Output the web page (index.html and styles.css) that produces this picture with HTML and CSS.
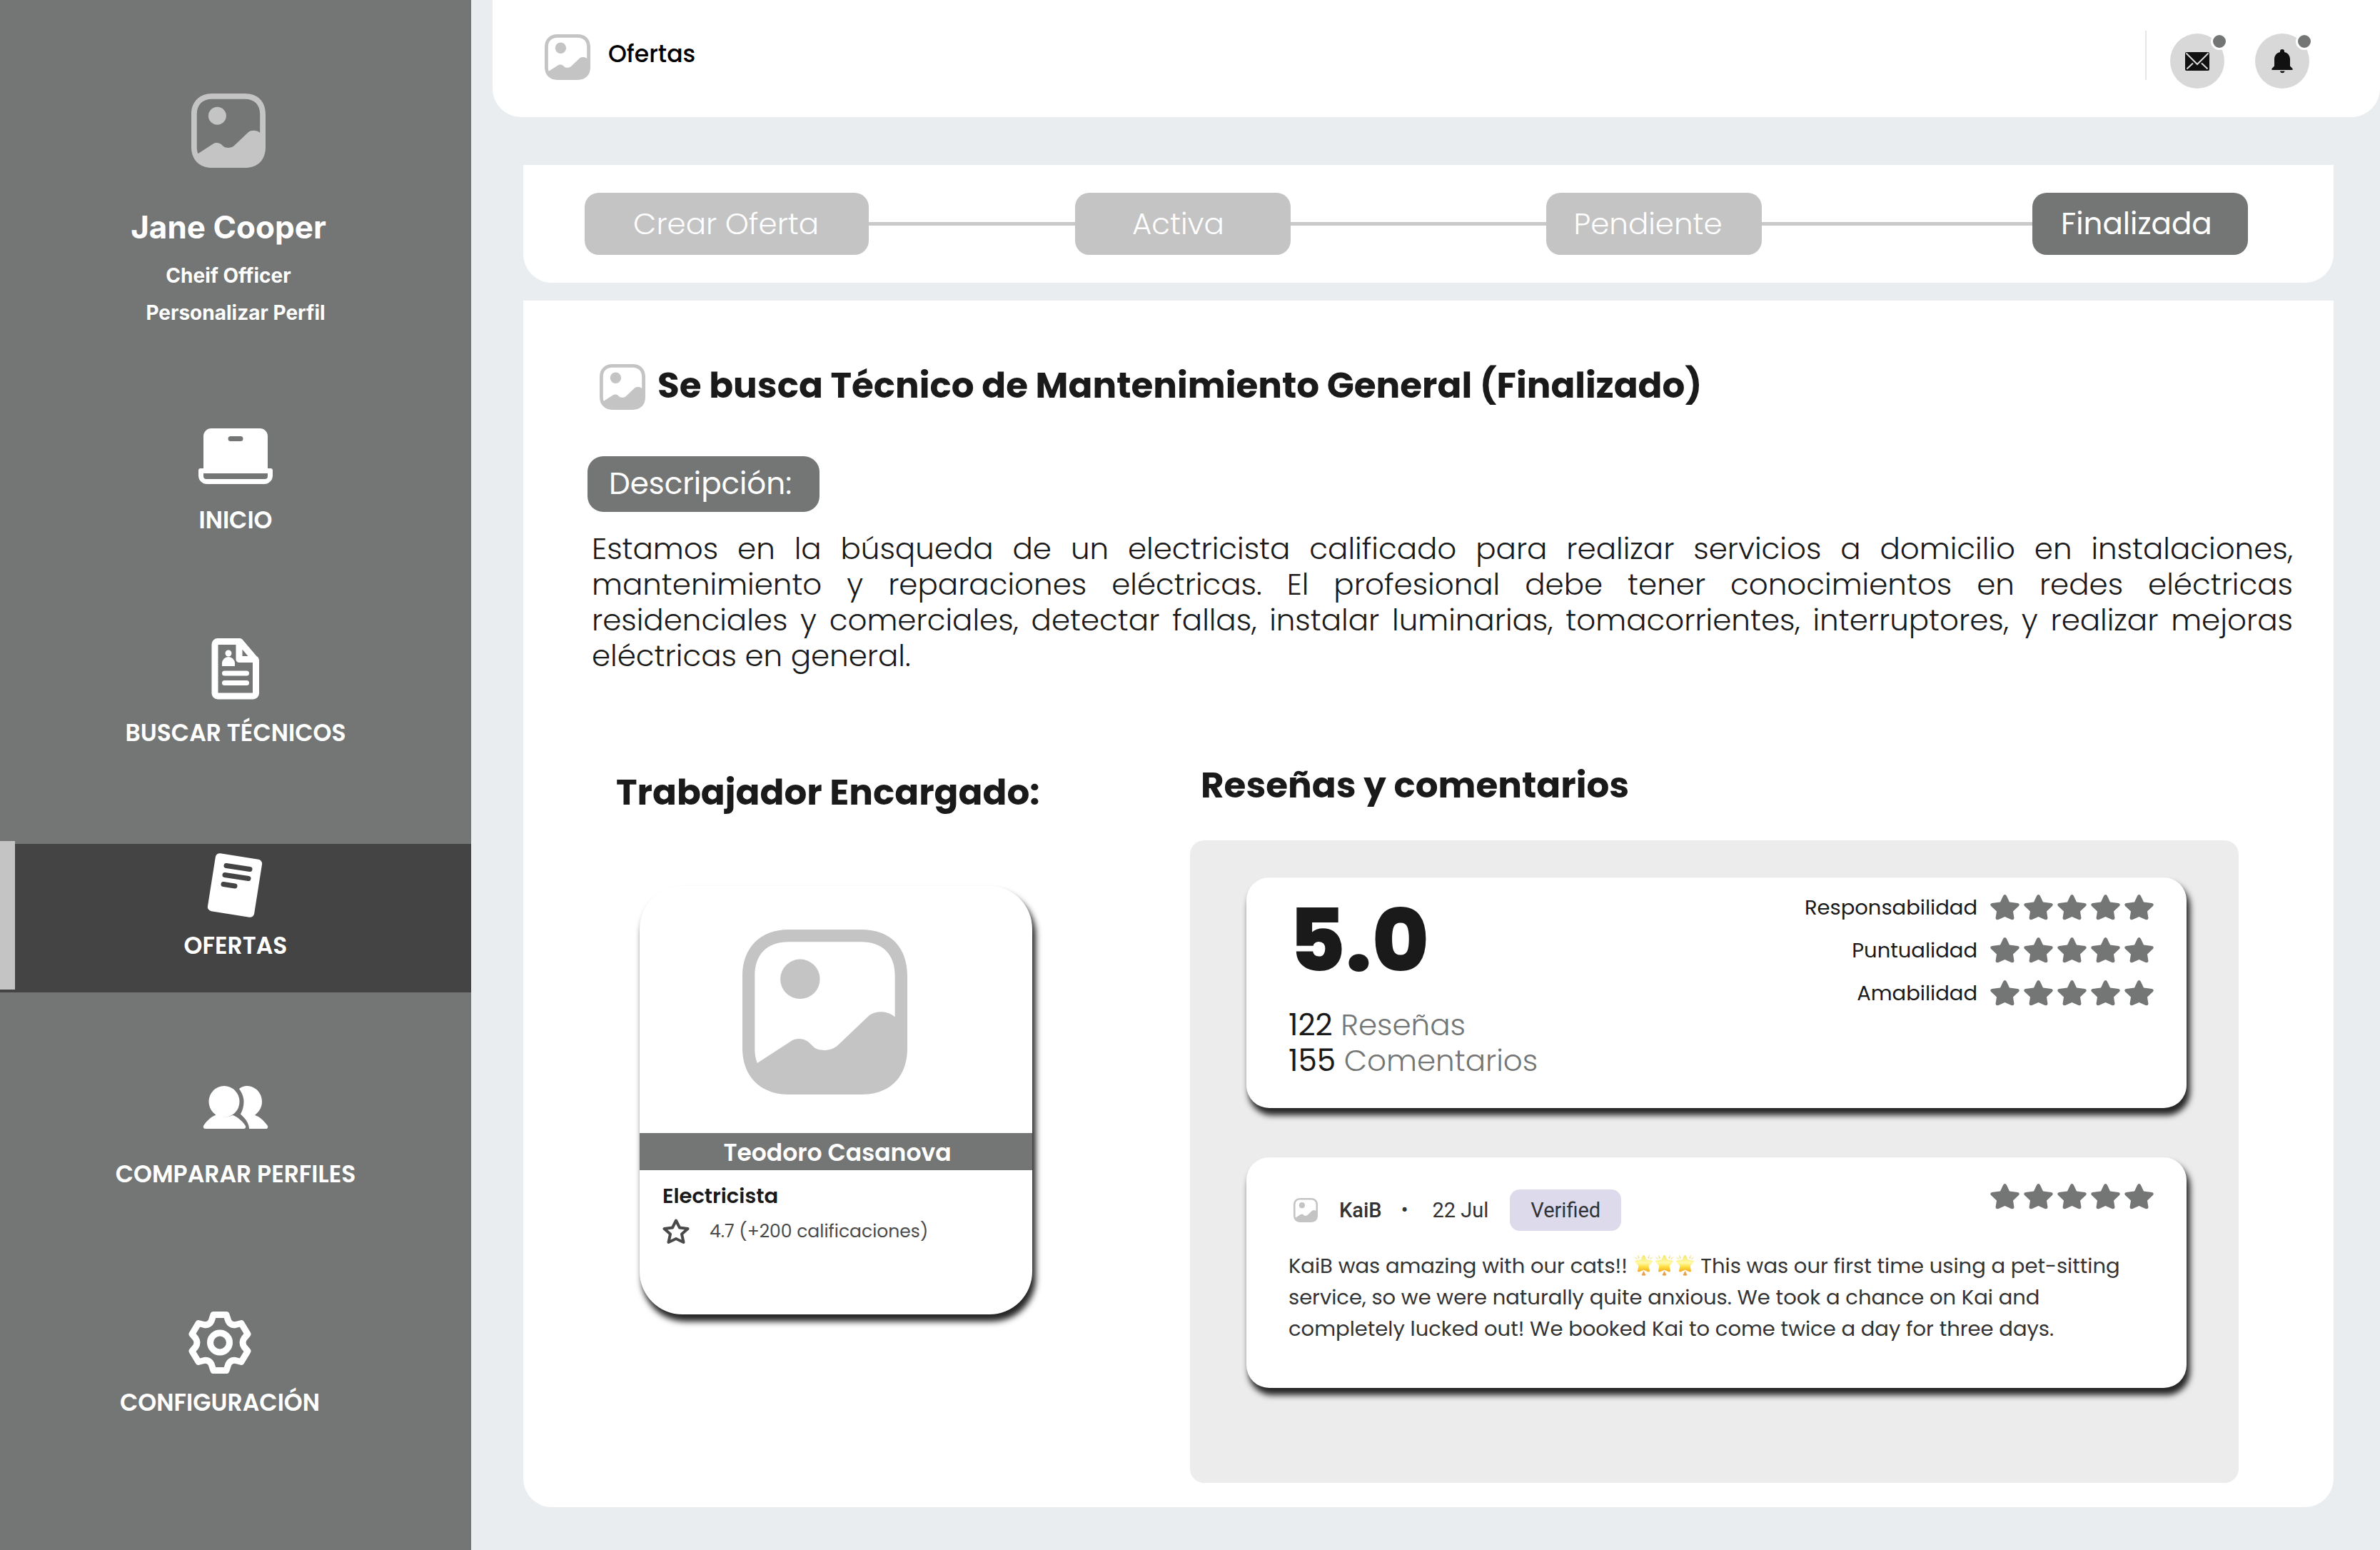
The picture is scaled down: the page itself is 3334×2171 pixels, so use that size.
FILE: index.html
```html
<!DOCTYPE html>
<html lang="es">
<head>
<meta charset="utf-8">
<meta name="viewport" content="width=device-width, initial-scale=1">
<title>Ofertas</title>
<link rel="stylesheet" href="styles.css">
</head>
<body>
<svg class="sprite" aria-hidden="true">
  <symbol id="image" viewBox="0 0 100 100">
    <path fill-rule="evenodd" d="M28 0H72C90 0 100 11 100 28V72C100 89 90 100 72 100H28C11 100 0 89 0 72V28C0 11 11 0 28 0ZM28 7.500H72C85 7.500 92.500 15 92.500 28V53C88 49 81 49 77 52L58 70C54 74 46 74 43 71L41 69C37.500 65.500 32 65.500 29 68L9 81C8 78 7.500 76 7.500 72V28C7.500 15 15 7.500 28 7.500Z"/>
    <circle cx="35" cy="30" r="12"/>
  </symbol>
  <symbol id="star" viewBox="0 0 41 36">
    <path d="M20.500 0q1.500 0 2.500 2L27 10.500L38.500 12q3.500 1 1.500 4L32 23.500L33.500 33q-.5 3-4 2L20.500 31L11.500 35q-3.500 1-4-2L9 23.500L1 16q-2-3 1.500-4L14 10.500L18 2q1-2 2.500-2z"/>
  </symbol>
  <symbol id="glow" viewBox="0 0 29 32">
    <path fill="#f1dc86" d="M6 1l3 5-2 1zM23 1l-3 5 2 1zM1 4l5 3-1 1zM28 4l-5 3 1 1z"/>
    <path fill="#e8a04a" d="M14.500 24l3 6q-3 1.500-6 0z"/>
    <path fill="url(#gold)" stroke="url(#gold)" stroke-width="3" stroke-linejoin="round" d="M14.500 3.500L17.500 9.500L25.500 11L20 16.500L21.500 24L14.500 21L7.500 24L9 16.500L3.500 11L11.500 9.500Z"/>
  </symbol>
  <linearGradient id="gold" gradientUnits="userSpaceOnUse" x1="0" y1="2" x2="0" y2="26"><stop offset="0" stop-color="#f6e468"/><stop offset=".45" stop-color="#fffaa8"/><stop offset=".7" stop-color="#fedc3c"/><stop offset="1" stop-color="#f2a526"/></linearGradient>
</svg>
<div class="app">
  <aside class="sidebar">
    <div class="profile">
      <svg class="profile__avatar" aria-hidden="true"><use href="#image"/></svg>
      <h2 class="profile__name">Jane Cooper</h2>
      <p class="profile__role">Cheif Officer</p>
    </div>
    <a class="profile__link" href="#perfil">Personalizar Perfil</a>
    <nav class="nav" aria-label="Principal">
      <a class="nav__item" href="#inicio">
        <svg class="nav__icon" viewBox="0 0 110 90" aria-hidden="true">
          <path fill-rule="evenodd" d="M10 57V11A11 11 0 0 1 21 0H89A11 11 0 0 1 100 11V57ZM48 11a3.500 3.500 0 0 0 0 7H62a3.500 3.500 0 0 0 0-7Z"/>
          <path fill-rule="evenodd" d="M6 56H104a3 3 0 0 1 3 3V66A12 12 0 0 1 95 78H15A12 12 0 0 1 3 66V59a3 3 0 0 1 3-3ZM10 63V67a4 4 0 0 0 4 4H96a4 4 0 0 0 4-4V63Z"/>
        </svg>
        <span class="nav__label">INICIO</span>
      </a>
      <a class="nav__item" href="#buscar">
        <svg class="nav__icon" viewBox="0 0 110 90" aria-hidden="true">
          <path class="line" d="M30 .5H61L83.500 27V73a4 4 0 0 1-4 4H30a4 4 0 0 1-4-4V4.500a4 4 0 0 1 4-4ZM60 2V25.500H83"/>
          <circle cx="45" cy="17" r="4.500"/>
          <path d="M36 35V31a9 9 0 0 1 18 0V35Z"/>
          <path class="line line--thin" d="M39.500 45H70.500M39.500 58.500H70.500"/>
        </svg>
        <span class="nav__label">BUSCAR TÉCNICOS</span>
      </a>
      <a class="nav__item nav__item--active" href="#ofertas" aria-current="page">
        <svg class="nav__icon" viewBox="0 0 110 90" aria-hidden="true">
          <rect x="21" y="3" width="66" height="82" rx="6" transform="rotate(9 54 44)"/>
          <path class="line line--cut" d="M42 16.500L75 21.500M40 29.500L73 34.500M38 42.500L54 45"/>
        </svg>
        <span class="nav__label">OFERTAS</span>
      </a>
      <a class="nav__item nav__item--apart" href="#comparar">
        <svg class="nav__icon" viewBox="0 0 110 90" aria-hidden="true">
          <ellipse cx="39" cy="27" rx="21.500" ry="22"/>
          <path d="M27 44Q39 52 51 46C58 48 66 56 69 61q1 4-3 4H13q-4 0-3-4C13 56 20 48 27 46Z"/>
          <path d="M60 9C64 6 67 5 70.500 5C82 5 92 14 92 27C92 35 88 41 82 46C89 48 96 55 100 61q1 4-3 4H74C74 57 68 50 62 44.500C65 39 66.500 33 66.500 27C66.500 20 63.500 14 60 9Z"/>
        </svg>
        <span class="nav__label">COMPARAR PERFILES</span>
      </a>
      <a class="nav__item nav__item--apart nav__item--config" href="#configuracion">
        <svg class="nav__icon" viewBox="0 0 110 90" aria-hidden="true">
          <g class="line" transform="translate(55 44.500)">
            <path d="M-9-39H9L12-30Q15-24 22-25L30-27L39-12L34-6Q30 0 34 6L39 12L30 27L22 25Q15 24 12 30L9 39H-9L-12 30Q-15 24-22 25L-30 27L-39 12L-34 6Q-30 0-34-6L-39-12L-30-27L-22-25Q-15-24-12-30Z"/>
            <circle r="13.500"/>
          </g>
        </svg>
        <span class="nav__label">CONFIGURACIÓN</span>
      </a>
    </nav>
  </aside>

  <div class="page">
    <header class="topbar">
      <svg class="image-icon" aria-hidden="true"><use href="#image"/></svg>
      <h1 class="topbar__title">Ofertas</h1>
      <div class="topbar__actions">
        <button class="round-button" type="button" aria-label="Mensajes">
          <svg width="34" height="26" viewBox="0 0 34 26" aria-hidden="true"><rect width="34" height="26" rx="2"/><path class="mail-fold" d="M1.500 1.500L17 17L32.500 1.500M2.500 23.500L11 15.500M31.500 23.500L23 15.500"/></svg>
        </button>
        <button class="round-button" type="button" aria-label="Notificaciones">
          <svg width="30" height="34" viewBox="0 0 30 34" aria-hidden="true"><path d="M15 0a3 3 0 0 1 3 3V4C23 5 26 9 26 14V23.500L29.500 27V29H.5V27L4 23.500V14C4 9 7 5 12 4V3A3 3 0 0 1 15 0ZM12 30.500H18.500a3.300 3.300 0 0 1-6.500 0Z"/></svg>
        </button>
      </div>
    </header>

    <main class="content">
      <ol class="stepper">
        <li class="step step--wide">Crear Oferta</li>
        <li class="step__line step__line--short" aria-hidden="true"></li>
        <li class="step step--center">Activa</li>
        <li class="step__line" aria-hidden="true"></li>
        <li class="step">Pendiente</li>
        <li class="step__line step__line--long" aria-hidden="true"></li>
        <li class="step step--current" aria-current="step">Finalizada</li>
      </ol>

      <section class="offer">
        <div class="offer__heading">
          <svg class="image-icon" aria-hidden="true"><use href="#image"/></svg>
          <h2 class="heading">Se busca Técnico de Mantenimiento General (Finalizado)</h2>
        </div>
        <h3 class="tag">Descripción:</h3>
        <p class="offer__text">Estamos en la búsqueda de un electricista calificado para realizar servicios a domicilio en instalaciones, mantenimiento y reparaciones eléctricas. El profesional debe tener conocimientos en redes eléctricas residenciales y comerciales, detectar fallas, instalar luminarias, tomacorrientes, interruptores, y realizar mejoras eléctricas en general.</p>

        <div class="columns">
          <section class="worker">
            <h2 class="heading">Trabajador Encargado:</h2>
            <article class="worker__card">
              <div class="worker__photo"><svg aria-hidden="true"><use href="#image"/></svg></div>
              <h3 class="worker__name">Teodoro Casanova</h3>
              <div class="worker__info">
                <p class="worker__job">Electricista</p>
                <p class="worker__rating">
                  <svg width="38" height="36" viewBox="0 0 38 36" aria-hidden="true"><path d="M19 2.500L24 12.500L35.500 14L27 21.500L29.500 33L19 28L8.500 33L11 21.500L2.500 14L14 12.500Z"/></svg>
                  4.7 (+200 calificaciones)
                </p>
              </div>
            </article>
          </section>

          <section class="reviews">
            <h2 class="heading reviews__heading">Reseñas y comentarios</h2>
            <div class="reviews__panel">
              <article class="card summary">
                <div>
                  <p class="summary__score">5.0</p>
                  <p class="summary__count"><b>122</b> Reseñas</p>
                  <p class="summary__count"><b>155</b> Comentarios</p>
                </div>
                <dl class="scores">
                  <dt>Responsabilidad</dt>
                  <dd class="stars" aria-label="5 de 5"><svg><use href="#star"/></svg><svg><use href="#star"/></svg><svg><use href="#star"/></svg><svg><use href="#star"/></svg><svg><use href="#star"/></svg></dd>
                  <dt>Puntualidad</dt>
                  <dd class="stars" aria-label="5 de 5"><svg><use href="#star"/></svg><svg><use href="#star"/></svg><svg><use href="#star"/></svg><svg><use href="#star"/></svg><svg><use href="#star"/></svg></dd>
                  <dt>Amabilidad</dt>
                  <dd class="stars" aria-label="5 de 5"><svg><use href="#star"/></svg><svg><use href="#star"/></svg><svg><use href="#star"/></svg><svg><use href="#star"/></svg><svg><use href="#star"/></svg></dd>
                </dl>
              </article>
              <article class="card review">
                <header class="review__header">
                  <div class="review__meta">
                    <svg class="review__avatar" aria-hidden="true"><use href="#image"/></svg>
                    <strong class="review__author">KaiB</strong>
                    <span class="review__dot">•</span>
                    <time class="review__date" datetime="07-22">22 Jul</time>
                    <span class="review__badge">Verified</span>
                  </div>
                  <div class="stars" role="img" aria-label="5 de 5"><svg><use href="#star"/></svg><svg><use href="#star"/></svg><svg><use href="#star"/></svg><svg><use href="#star"/></svg><svg><use href="#star"/></svg></div>
                </header>
                <p class="review__text">KaiB was amazing with our cats!! <span class="glows" role="img" aria-label="estrellas"><svg><use href="#glow"/></svg><svg><use href="#glow"/></svg><svg><use href="#glow"/></svg></span> This was our first time using a pet-sitting service, so we were naturally quite anxious. We took a chance on Kai and completely lucked out! We booked Kai to come twice a day for three days.</p>
              </article>
            </div>
          </section>
        </div>
      </section>
    </main>
  </div>
</div>
</body>
</html>
```
FILE: styles.css
```css
:root {
  --gray: #747675;
  --gray-light: #c4c4c4;
  --dark: #444444;
  --ink: #1a1a1a;
  --shadow: 4px 9px 8px 1px #262626;
}

*,
*::before,
*::after { box-sizing: border-box; }

body,
h1, h2, h3, p, ol, dl, dd { margin: 0; padding: 0; }

body {
  background: #e9edf0;
  color: var(--ink);
  font-family: "Poppins", "Inter", sans-serif;
}

a { color: inherit; text-decoration: none; }

.sprite { position: absolute; width: 0; height: 0; }

.app {
  display: grid;
  grid-template-columns: 660px minmax(0, 1fr);
  min-height: 100vh;
}

/* Sidebar */
.sidebar {
  background: var(--gray);
  color: #fff;
  padding-top: 131px;
}

.profile {
  display: flex;
  flex-direction: column;
  align-items: center;
  padding-right: 20px;
}

.profile__avatar {
  width: 104px;
  height: 104px;
  fill: var(--gray-light);
}

.profile__name {
  margin-top: 55px;
  font: 700 44px/56px "Inter", sans-serif;
}

.profile__role {
  margin-top: 20px;
  font: 700 28px/40px "Inter", sans-serif;
}

.profile__link {
  display: block;
  margin-top: 12px;
  font: 700 28px/40px "Inter", sans-serif;
  text-align: center;
}

.nav {
  display: flex;
  flex-direction: column;
  gap: 90px;
  padding-top: 128px;
}

.nav__item {
  position: relative;
  display: flex;
  flex-direction: column;
  align-items: center;
  gap: 17px;
  height: 208px;
  padding-top: 14px;
}

.nav__item--apart { margin-top: 22px; }
.nav__item--config { padding-right: 44px; }
.nav__item--active { background: var(--dark); }

.nav__item--active::before {
  content: "";
  position: absolute;
  left: 0;
  top: -4px;
  bottom: 4px;
  width: 21px;
  background: var(--gray-light);
}

.nav__icon {
  width: 110px;
  height: 90px;
  overflow: visible;
  fill: #fff;
}

.line {
  fill: none;
  stroke: #fff;
  stroke-width: 9px;
  stroke-linejoin: round;
  stroke-linecap: round;
}

.line--thin { stroke-width: 7px; }
.line--cut { stroke: var(--dark); stroke-width: 7px; }

.nav__label {
  font-size: 33px;
  font-weight: 600;
  line-height: 44px;
}

/* Top bar */
.page {
  display: flex;
  flex-direction: column;
}

.topbar {
  display: flex;
  align-items: flex-start;
  height: 164px;
  margin-left: 30px;
  padding: 43px 99px 0 73px;
  background: #fff;
  border-radius: 0 0 40px 40px;
}

.image-icon {
  flex: none;
  width: 64px;
  height: 64px;
  fill: var(--gray-light);
}

.topbar .image-icon { margin-top: 5px; }

.topbar__title {
  margin-left: 25px;
  color: #000;
  font-size: 33px;
  font-weight: 500;
  line-height: 65px;
}

.topbar__actions {
  display: flex;
  gap: 43px;
  height: 69px;
  margin-left: auto;
  padding: 4px 0 0 33px;
  border-left: 2px solid #e4e6ea;
}

.round-button {
  position: relative;
  display: grid;
  place-items: center;
  width: 76px;
  height: 77px;
  padding: 0;
  border: 0;
  border-radius: 50%;
  background: #d8d8d8;
  fill: #111;
}

.round-button::after {
  content: "";
  position: absolute;
  top: -1px;
  right: -5px;
  width: 24px;
  height: 24px;
  border: 3px solid #fff;
  border-radius: 50%;
  background: var(--gray);
}

.mail-fold { fill: none; stroke: #d8d8d8; stroke-width: 2px; }

/* Stepper */
.content {
  display: flex;
  flex: 1;
  flex-direction: column;
  gap: 25px;
  padding: 67px 65px 60px 73px;
}

.stepper {
  display: flex;
  align-items: center;
  height: 165px;
  padding: 0 120px 0 86px;
  background: #fff;
  border-radius: 0 0 40px 40px;
  list-style: none;
}

.step {
  width: 302px;
  padding-left: 38px;
  border-radius: 20px;
  background: var(--gray-light);
  color: #fff;
  font-size: 42px;
  font-weight: 300;
  line-height: 87px;
}

.step--wide { width: 398px; padding-left: 68px; }
.step--center { padding-left: 80px; }
.step--current { padding-left: 40px; background: var(--gray); font-weight: 400; }

.step__line {
  flex: 36;
  height: 5px;
  background: #c9c9c9;
}

.step__line--short { flex: 29; }
.step__line--long { flex: 38; }

/* Offer */
.offer {
  flex: 1;
  padding: 89px 57px 34px 90px;
  background: #fff;
  border-radius: 0 0 40px 40px;
}

.offer__heading {
  display: flex;
  gap: 17px;
  padding-left: 17px;
}

.heading {
  font-size: 50px;
  font-weight: 700;
  line-height: 60px;
}

.tag {
  width: fit-content;
  margin-top: 65px;
  padding: 0 39px 0 30px;
  border-radius: 22px;
  background: var(--gray);
  color: #fff;
  font-size: 42px;
  font-weight: 400;
  line-height: 78px;
}

.offer__text {
  margin-top: 27px;
  padding-left: 6px;
  font-size: 42px;
  font-weight: 300;
  line-height: 50px;
  text-align: justify;
}

.columns {
  display: grid;
  grid-template-columns: 804fr 1469fr;
  margin-top: 126px;
  padding: 0 76px 0 40px;
}

.worker { padding-top: 10px; }

.worker__card {
  width: 550px;
  height: 600px;
  margin: 101px 0 0 33px;
  padding-top: 61px;
  border-radius: 60px;
  background: #fff;
  box-shadow: var(--shadow);
}

.worker__photo {
  display: flex;
  justify-content: center;
  padding-right: 32px;
}

.worker__photo svg {
  width: 231px;
  height: 231px;
  fill: var(--gray-light);
}

.worker__name {
  margin-top: 54px;
  padding: 4px 0 0 4px;
  background: var(--gray);
  color: #fff;
  font-size: 33px;
  font-weight: 600;
  line-height: 48px;
  text-align: center;
}

.worker__info { padding: 16px 32px; }

.worker__job {
  font-size: 29px;
  font-weight: 600;
  line-height: 40px;
}

.worker__rating {
  display: flex;
  align-items: center;
  gap: 28px;
  margin-top: 12px;
  color: #4a4a4a;
  font-size: 25px;
  line-height: 36px;
}

.worker__rating svg {
  fill: none;
  stroke: #4a4a4a;
  stroke-width: 4px;
  stroke-linejoin: round;
}

/* Reviews */
.reviews__heading { padding-left: 15px; }

.reviews__panel {
  display: flex;
  flex-direction: column;
  gap: 69px;
  margin-top: 47px;
  padding: 52px 73px 133px 79px;
  border-radius: 20px;
  background: #ececec;
}

.card {
  height: 323px;
  border-radius: 32px;
  background: #fff;
  box-shadow: var(--shadow);
}

.summary {
  display: flex;
  justify-content: space-between;
  padding: 12px 46px 0 59px;
}

.summary__score {
  margin: 17px 0 33px;
  font-size: 122px;
  font-weight: 800;
  line-height: 120px;
}

.summary__count {
  color: #747675;
  font-size: 42px;
  font-weight: 300;
  line-height: 50px;
}

.summary__count b { color: var(--ink); font-weight: 400; }

.scores {
  display: grid;
  grid-template-columns: auto auto;
  grid-auto-rows: 60px;
  align-content: start;
  align-items: center;
  column-gap: 18px;
  font-size: 29px;
  text-align: right;
}

.stars {
  display: flex;
  gap: 6px;
}

.stars svg {
  width: 41px;
  height: 36px;
  fill: var(--gray);
}

.review {
  padding: 37px 46px 0 59px;
  color: #333;
}

.review__header {
  display: flex;
  align-items: flex-start;
  justify-content: space-between;
}

.review__meta {
  display: flex;
  align-items: center;
  margin-top: 8px;
  padding-left: 7px;
  font: 400 29px/58px "Roboto", sans-serif;
}

.review__avatar {
  width: 34px;
  height: 34px;
  fill: var(--gray-light);
}

.review__author { margin-left: 30px; font-weight: 500; }
.review__dot { margin: 0 34px 0 27px; }

.review__badge {
  margin-left: 30px;
  padding: 0 29px;
  border-radius: 14px;
  background: #dddaec;
}

.review__text {
  max-width: 1190px;
  margin-top: 27px;
  font-size: 29px;
  line-height: 44px;
}

.glows svg {
  width: 29px;
  height: 32px;
  vertical-align: -5px;
}
```
